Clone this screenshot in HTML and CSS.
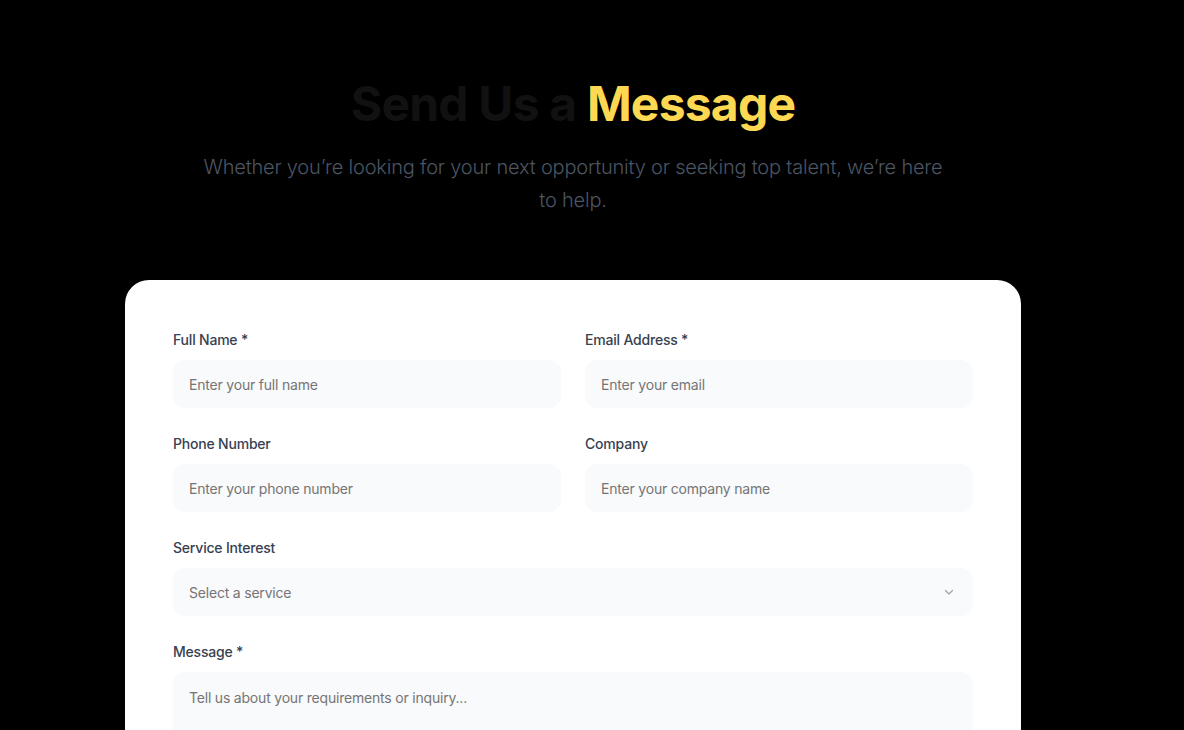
FILE: index.html
```html
<!DOCTYPE html>
<html lang="en">
<head>
<meta charset="utf-8">
<title>Send Us a Message</title>
<link rel="stylesheet" href="styles.css">
</head>
<body>
<section class="contact">
  <header class="intro">
    <h1 class="title">Send Us a <span class="accent">Message</span></h1>
    <p class="lead">Whether you’re looking for your next opportunity or seeking top talent, we’re here to help.</p>
  </header>
  <form class="card">
    <div class="row two">
      <div class="field">
        <label class="label">Full Name *</label>
        <input class="input" type="text" placeholder="Enter your full name">
      </div>
      <div class="field">
        <label class="label">Email Address *</label>
        <input class="input" type="email" placeholder="Enter your email">
      </div>
    </div>
    <div class="row two">
      <div class="field">
        <label class="label">Phone Number</label>
        <input class="input" type="tel" placeholder="Enter your phone number">
      </div>
      <div class="field">
        <label class="label">Company</label>
        <input class="input" type="text" placeholder="Enter your company name">
      </div>
    </div>
    <div class="row">
      <div class="field">
        <label class="label">Service Interest</label>
        <div class="select">
          <span class="select-text">Select a service</span>
          <svg class="chev" width="12" height="12" viewBox="0 0 12 12" fill="none"><path d="M2.5 4.5 6 8l3.5-3.5" stroke="#9ca3af" stroke-width="1.2" stroke-linecap="round" stroke-linejoin="round"/></svg>
        </div>
      </div>
    </div>
    <div class="row">
      <div class="field">
        <label class="label">Message *</label>
        <textarea class="input area" placeholder="Tell us about your requirements or inquiry..."></textarea>
      </div>
    </div>
  </form>
</section>
</body>
</html>
```

FILE: styles.css
```css
* { box-sizing: border-box; }
html, body { margin: 0; padding: 0; }
body {
  background: #000;
  font-family: Inter, "Noto Sans", sans-serif;
  height: 730px;
  overflow: hidden;
}
.contact {
  padding-top: 80px;
  padding-right: 38px;
  display: flex;
  flex-direction: column;
  align-items: center;
}
.intro {
  text-align: center;
  max-width: 756px;
}
.title {
  margin: 0;
  font-size: 48px;
  line-height: 48px;
  font-weight: 700;
  letter-spacing: -0.8px;
  color: #111111;
}
.accent { color: #fdd852; }
.lead {
  margin: 23px 0 0;
  font-size: 20px;
  line-height: 33px;
  font-weight: 300;
  letter-spacing: -0.2px;
  color: #4b5563;
}
.card {
  margin-top: 63px;
  width: 896px;
  background: #fff;
  border-radius: 24px;
  padding: 48px 48px 40px;
  display: flex;
  flex-direction: column;
  gap: 24px;
}
.row { display: grid; grid-template-columns: 1fr; gap: 24px; }
.row.two { grid-template-columns: 1fr 1fr; }
.field { display: flex; flex-direction: column; }
.label {
  font-size: 14px;
  line-height: 24px;
  font-weight: 500;
  color: #374151;
  margin-bottom: 8px;
  letter-spacing: -0.2px;
}
.input, .select {
  height: 48px;
  border: none;
  border-radius: 12px;
  background: #f9fafb;
  padding: 0 16px;
  font-family: inherit;
  font-size: 14px;
  color: #374151;
  outline: none;
  letter-spacing: -0.2px;
}
.input::placeholder { color: #757575; }
.select {
  display: flex;
  align-items: center;
  justify-content: space-between;
}
.select-text { color: #757575; }
.chev { margin-right: 2px; }
.area {
  height: 120px;
  padding-top: 16px;
  resize: none;
  line-height: 20px;
}
```
